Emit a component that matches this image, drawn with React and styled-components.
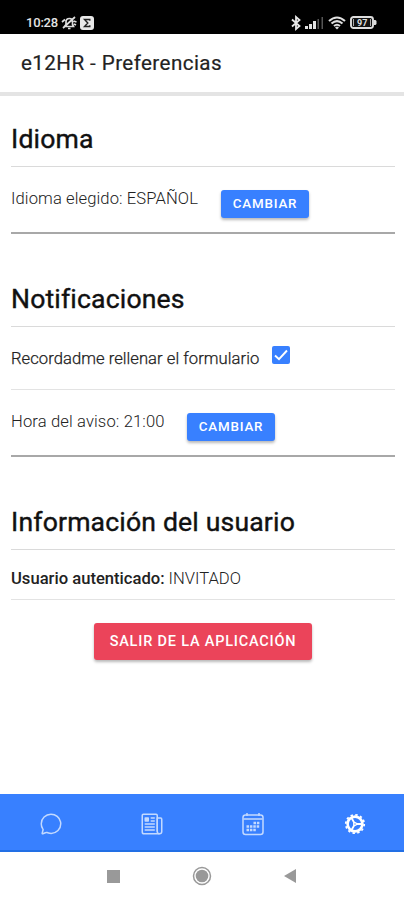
import React from "react";
import styled, { createGlobalStyle } from "styled-components";
import { IoChatbubbleOutline, IoNewspaperOutline } from "react-icons/io5";

const GlobalStyle = createGlobalStyle`
  * { box-sizing: border-box; }
  body { margin: 0; background: #fff; font-family: Roboto, "Liberation Sans", sans-serif; }
`;

const Screen = styled.div`
  display: flex;
  flex-direction: column;
  width: 404px;
  height: 900px;
  overflow: hidden;
  background: #fff;
`;

const StatusBar = styled.div`
  display: flex;
  justify-content: space-between;
  height: 34px;
  padding: 12px 27px 0 26px;
  background: #000;
  color: #e4e4e4;
`;

const StatusGroup = styled.div`
  display: flex;
  align-items: center;
  height: 21px;
  gap: ${(p) => p.$gap}px;
`;

const Clock = styled.span`
  width: 32px;
  font-size: 13px;
  font-weight: 500;
  letter-spacing: -0.2px;
  white-space: nowrap;
`;

const Header = styled.header`
  display: flex;
  align-items: center;
  height: 62px;
  padding: 0 21px;
  border-bottom: 4px solid #e4e4e4;
`;

const Title = styled.h1`
  margin: 0;
  font-size: 20.6px;
  font-weight: 400;
  letter-spacing: 0.42px;
  color: #222;
  -webkit-text-stroke: 0.2px #222;
`;

const Content = styled.main`
  height: 698px;
  padding: 0 9px 0 11px;
`;

const Section = styled.section`
  padding-top: ${(p) => p.$top}px;
`;

const Heading = styled.h2`
  height: 46px;
  margin: 0;
  border-bottom: 1px solid #dadada;
  font-size: 26.6px;
  font-weight: 400;
  line-height: 35px;
  letter-spacing: 0.16px;
  color: #111;
  -webkit-text-stroke: 0.4px #111;
`;

const Row = styled.div`
  display: flex;
  align-items: flex-start;
  height: ${(p) => p.$height}px;
  border-bottom: ${(p) => (p.$strong ? "2px solid #a8a8a8" : "1px solid #e3e3e3")};
`;

const Label = styled.span`
  width: ${(p) => p.$width}px;
  margin-top: ${(p) => p.$top}px;
  font-size: 16.6px;
  font-weight: 300;
  line-height: 20px;
  letter-spacing: ${(p) => p.$spacing || 0}px;
  white-space: nowrap;
  color: #222;
  -webkit-text-stroke: ${(p) => (p.$dark ? 0.25 : 0)}px #222;
`;

const Strong = styled.strong`
  font-weight: 500;
`;

const Button = styled.button`
  height: 28px;
  width: 88px;
  margin: ${(p) => p.$top}px 0 0;
  padding: 0 0 1px;
  border: 0;
  border-radius: 3px;
  background: #3880ff;
  box-shadow: 0 2px 3px rgba(0, 0, 0, 0.28);
  color: #fff;
  font-family: inherit;
  font-size: 13.4px;
  font-weight: 500;
  letter-spacing: 0.8px;
  white-space: nowrap;
`;

const ExitButton = styled(Button)`
  display: block;
  width: 218px;
  height: 37px;
  margin: 23px 0 0 83px;
  padding-bottom: 0;
  background: #eb445a;
  font-size: 14.5px;
  letter-spacing: 0.8px;
`;

const Checkbox = styled.span`
  display: grid;
  place-items: center;
  width: 18px;
  height: 18px;
  margin-top: 19px;
  border-radius: 2px;
  background: #3880ff;
`;

const TabBar = styled.nav`
  display: grid;
  grid-template-columns: repeat(4, 1fr);
  height: 58px;
  background: #3880ff;
  border-bottom: 2px solid #226fe5;
`;

const Tab = styled.a`
  display: grid;
  place-items: center;
  padding-top: 3px;
  font-size: 24px;
  color: ${(p) => (p.$active ? "#fff" : "#c3d9ff")};
`;

const SystemNav = styled.div`
  display: flex;
  align-items: center;
  justify-content: space-between;
  height: 48px;
  padding: 0 107px;
`;

const MutedBell = () => (
  <svg width="16" height="16" viewBox="0 0 16 16" fill="none" stroke="#ddd" strokeWidth="1.7">
    <path d="M3.500 11.500h9l-1-2V7c0-2-1-3.500-3-3.500S5 5 5 7v2.500zM7 13.500h2.500M2 13 14 2M1 7l3-2.500M12.500 6l3 1M13 9l2 1" />
  </svg>
);

const SigmaBadge = () => (
  <svg width="14" height="14" viewBox="0 0 14 14">
    <rect width="14" height="14" rx="3" fill="#e9e9e9" />
    <path d="M9.8 4.8V3.5H4.5L7.8 7l-3.3 3.5h5.3V9.2" fill="none" stroke="#222" strokeWidth="1.4" />
  </svg>
);

const Bluetooth = () => (
  <svg width="10" height="16" viewBox="0 0 10 16" fill="none" stroke="#e8e8e8" strokeWidth="1.8">
    <path d="m1 4.500 7.500 6.500L5 14V2l3.500 3L1 11.500" />
  </svg>
);

const Signal = () => (
  <svg width="19" height="12" viewBox="0 0 19 12">
    <path d="M0 9h3v3H0zM4 7h3v5H4zM8 4h3v8H8z" fill="#e1e1e1" />
    <path d="M12.500 2H14v10h-1.500zM16.500 0H18v12h-1.500z" fill="#555" />
  </svg>
);

const Wifi = () => (
  <svg width="18" height="14" viewBox="0 0 18 14" fill="none" stroke="#e1e1e1" strokeWidth="2.100">
    <path d="M1 5Q9-2 17 5M3.500 7.500Q9 2.800 14.500 7.500M6 10q3-2.500 6 0" />
    <path d="m7 11.500 2 2 2-2-2-1z" fill="#e1e1e1" stroke="none" />
  </svg>
);

const BatteryText = styled.text`
  font: 700 9px Roboto, sans-serif;
  fill: #ddd;
`;

const Battery = () => (
  <svg width="27" height="13" viewBox="0 0 27 13">
    <rect x="1" y="1" width="22" height="11" rx="2.500" fill="#111" stroke="#ddd" strokeWidth="1.900" />
    <path d="M24 4h1.500l1 1v3l-1 1H24z" fill="#ddd" />
    <path d="M3.500 3v7M20.500 3v7" stroke="#aaa" />
    <BatteryText x="7" y="9.800">97</BatteryText>
  </svg>
);

const CalendarIcon = () => (
  <svg width="24" height="24" viewBox="0 0 24 24" fill="none" stroke="currentColor" strokeWidth="1.500">
    <rect x="2" y="3" width="20" height="19.500" rx="2.500" />
    <path d="M6 1v3M18 1v3M2.500 7h19" />
    <path d="M12.500 11h6.500M5.500 14.500h13.500M5.500 18h10" strokeWidth="2.500" strokeDasharray="2.500 0.900" />
  </svg>
);

const SettingsIcon = () => (
  <svg width="24" height="24" viewBox="0 0 24 24" fill="none" stroke="currentColor">
    <circle cx="13" cy="12" r="9.200" strokeWidth="1.800" strokeDasharray="2.400 2.417" />
    <circle cx="13" cy="12" r="7.400" strokeWidth="2.600" />
    <path d="M13 12H20M13 12 9.400 5.800M13 12l-3.600 6.200" strokeWidth="1.800" />
    <circle cx="13" cy="12" r="2" fill="currentColor" stroke="none" />
    <circle cx="13" cy="12" r="0.700" fill="#3880ff" stroke="none" />
  </svg>
);

export default function App() {
  return (
    <Screen>
      <GlobalStyle />
      <StatusBar>
        <StatusGroup $gap={3}>
          <Clock>10:28</Clock>
          <MutedBell />
          <SigmaBadge />
        </StatusGroup>
        <StatusGroup $gap={4}>
          <Bluetooth />
          <Signal />
          <Wifi />
          <Battery />
        </StatusGroup>
      </StatusBar>
      <Header>
        <Title>e12HR - Preferencias</Title>
      </Header>
      <Content>
        <Section $top={25}>
          <Heading>Idioma</Heading>
          <Row $height={67} $strong>
            <Label $width={210} $top={22} $spacing={0.1}>Idioma elegido: ESPAÑOL</Label>
            <Button $top={23}>CAMBIAR</Button>
          </Row>
        </Section>
        <Section $top={47}>
          <Heading>Notificaciones</Heading>
          <Row $height={63}>
            <Label $width={261} $top={22} $spacing={0.05} $dark>Recordadme rellenar el formulario</Label>
            <Checkbox role="checkbox" aria-checked="true">
              <svg width="14" height="12" viewBox="0 0 14 12" fill="none" stroke="#fff" strokeWidth="1.900">
                <path d="m1 6.500 4 3.700L13 1.500" />
              </svg>
            </Checkbox>
          </Row>
          <Row $height={67} $strong>
            <Label $width={176} $top={22} $spacing={0.13}>Hora del aviso: 21:00</Label>
            <Button $top={23}>CAMBIAR</Button>
          </Row>
        </Section>
        <Section $top={47}>
          <Heading>Información del usuario</Heading>
          <Row $height={50}>
            <Label $width={240} $top={19}>
              <Strong>Usuario autenticado:</Strong> INVITADO
            </Label>
          </Row>
          <ExitButton>SALIR DE LA APLICACIÓN</ExitButton>
        </Section>
      </Content>
      <TabBar>
        <Tab aria-label="Mensajes"><IoChatbubbleOutline /></Tab>
        <Tab aria-label="Noticias"><IoNewspaperOutline /></Tab>
        <Tab aria-label="Calendario"><CalendarIcon /></Tab>
        <Tab aria-label="Preferencias" $active><SettingsIcon /></Tab>
      </TabBar>
      <SystemNav>
        <svg width="13" height="13" viewBox="0 0 13 13"><path d="M0 0h13v13H0z" fill="#999" /></svg>
        <svg width="20" height="20" viewBox="0 0 20 20">
          <circle cx="10" cy="10" r="8.500" fill="none" stroke="#999" strokeWidth="1.500" />
          <circle cx="10" cy="10" r="6.300" fill="#999" />
        </svg>
        <svg width="13" height="14" viewBox="0 0 13 14"><path d="M0 7 12 0v14z" fill="#999" /></svg>
      </SystemNav>
    </Screen>
  );
}
